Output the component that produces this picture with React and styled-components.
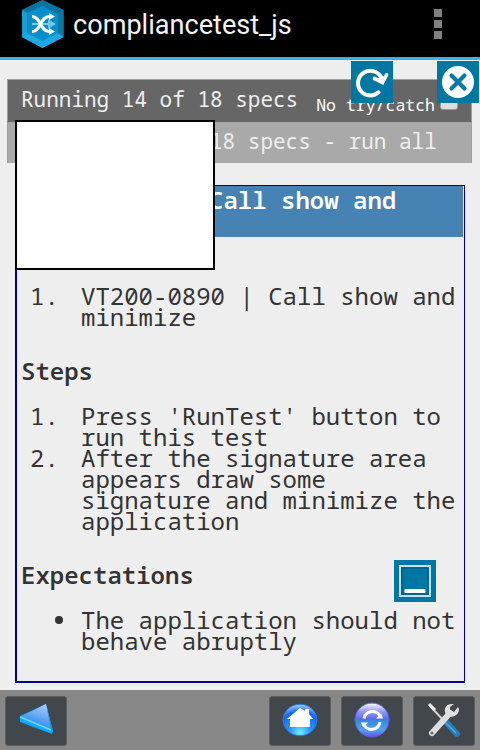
import React from 'react';
import styled, { createGlobalStyle } from 'styled-components';

const mono = '"Noto Sans Mono", "DejaVu Sans Mono", monospace';

const GlobalStyle = createGlobalStyle`
  * { box-sizing: border-box; }
  body { margin: 0; background: #eee; }
`;
const Screen = styled.div`
  position: relative;
  display: flex;
  flex-direction: column;
  width: 480px;
  height: 750px;
  overflow: hidden;
  background: #eee;
  color: #333;
  font-family: ${mono};
`;
const AppBar = styled.header`
  display: flex;
  align-items: center;
  flex: none;
  height: 60px;
  padding: 0 38px 0 21px;
  background: #000;
  border-bottom: 3px solid #33b5e5;
`;
const Logo = styled.svg`
  flex: none;
  width: 43px;
  height: 48px;
  margin-top: -9px;
`;
const Title = styled.h1`
  flex: 1;
  margin: -8px 0 0 9px;
  font: 400 27.100px/32px Roboto, sans-serif;
  color: #f3f3f3;
`;
const MenuDots = styled.div`
  display: grid;
  gap: 3px;
  margin-top: -9px;
  i { width: 8px; height: 8px; background: #808080; }
`;
const Content = styled.main`
  flex: 1;
  padding: 19px 8px 0 7px;
`;
const Bar = styled.div`
  display: flex;
  align-items: center;
  height: 42px;
  padding-left: ${p => p.$indent || 13}px;
  padding-bottom: 3px;
  background: ${p => p.$bg};
  border-left: 1px solid #a0a0a0;
  border-right: 1px solid #a0a0a0;
  border-top: 1px solid ${p => p.$edge};
  color: #eee;
  font-size: 21px;
  line-height: 38px;
  white-space: pre;
`;
const TryCatch = styled.label`
  display: flex;
  align-items: center;
  gap: 5px;
  margin-left: 18px;
  padding-top: 12px;
  font-size: 16.5px;
  color: #fff;
`;
const Checkbox = styled.span`
  width: 18px;
  height: 18px;
  margin-top: -8px;
  border: 1px solid #999;
  border-radius: 3px;
  background: #ddd;
`;
const Spec = styled.section`
  height: 498px;
  margin: 22px 0 0 8px;
  width: 450px;
  border: solid #00008b;
  border-width: 1px 1px 2px 2px;
  font-size: 24px;
  line-height: 21px;
`;
const SpecTitle = styled.h2`
  height: 51px;
  margin: 0 1px 0 0;
  padding: 3px 0 0 192px;
  background: #4682b4;
  color: #fff;
  font-size: 24px;
  font-weight: 600;
  line-height: 21px;
`;
const SubTitle = styled.h3`
  margin: 33px 0 24px 4px;
  font-size: 24px;
  font-weight: 600;
  line-height: 21px;
`;
const List = styled.div`
  margin-top: ${p => p.$top || 0}px;
`;
const Item = styled.div`
  display: grid;
  grid-template-columns: 51px 382px;
  padding-left: 13px;
`;
const Bullet = styled.i`
  width: 8px;
  height: 8px;
  margin: 7px 0 0 25px;
  border-radius: 50%;
  background: #333;
`;
const SignatureArea = styled.div`
  position: absolute;
  left: 15px;
  top: 120px;
  width: 200px;
  height: 150px;
  background: #fff;
  border: 2px solid #000;
`;
const FloatButton = styled.button`
  position: absolute;
  left: ${p => p.$x}px;
  top: ${p => p.$y}px;
  width: 42px;
  height: 42px;
  padding: 0;
  border: 0;
  background: #0077a3;
  svg { display: block; }
`;
const Toolbar = styled.footer`
  display: flex;
  flex: none;
  gap: 10px;
  height: 60px;
  padding: 6px 5px 4px;
  background: #888;
`;
const ToolButton = styled.button`
  display: grid;
  place-items: center;
  width: 62px;
  height: 50px;
  padding: 0 0 ${p => (p.$first ? 4 : 2)}px;
  margin-right: ${p => (p.$first ? 'auto' : 0)};
  border: 1px solid #5b5e60;
  border-radius: 3px;
  background: #41474b;
`;

function AppLogo() {
  return (
    <Logo viewBox="0 0 43 48">
      <path d="M21.5 0L42.5 10V37L21.5 48L1 37V10Z" fill="#078fc9" />
      <path d="M21.5 0L42.5 10L37 14L21.5 6L6 13L1 10Z" fill="#0673a0" />
      <path d="M42.5 10V37L37 33V14Z" fill="#0878a5" />
      <path d="M1 10L6 13V33L1 37Z" fill="#199ed4" />
      <path d="M1 37L6 33L21.5 41L37 33L42.5 37L21.5 48Z" fill="#1caae4" />
      <path d="M11 24H29M28 21L33 24L28 27Z" fill="#74c8e9" stroke="#74c8e9" strokeWidth="2" />
      <path d="M11 31.500C20 32 19 16.500 28 16.500H30M11 16.500C20 16.500 19 31.500 28 31.500H30" fill="none" stroke="#fff" strokeWidth="3" />
      <path d="M28 13L34 16.500L28 20ZM28 28L34 31.500L28 35Z" fill="#fff" />
    </Logo>
  );
}
function RefreshIcon() {
  return (
    <svg width="42" height="42" viewBox="0 0 42 42">
      <path d="M27.500 31.300A12.300 12.300 0 1 1 30.500 17" fill="none" stroke="#fff" strokeWidth="4" strokeLinecap="round" />
      <path d="M23.500 17.500L31.500 21.500L35.500 14" fill="none" stroke="#fff" strokeWidth="3.700" strokeLinecap="round" />
      <path d="M26 18L31 15L34 16L31.500 21Z" fill="#fff" />
    </svg>
  );
}
function CloseIcon() {
  return (
    <svg width="42" height="42" viewBox="0 0 42 42">
      <circle cx="21" cy="21" r="16" fill="#fff" />
      <path d="M14.500 14.500L27.500 27.500M27.500 14.500L14.500 27.500" stroke="#087aa5" strokeWidth="4.200" strokeLinecap="round" />
    </svg>
  );
}
function MinimizeIcon() {
  return (
    <svg width="42" height="42" viewBox="0 0 42 42">
      <rect x="6" y="6" width="30" height="30" fill="none" stroke="#c2e1ec" strokeWidth="2" />
      <rect x="8" y="8" width="26" height="26" fill="none" stroke="#006289" strokeWidth="1.500" />
      <rect x="10.500" y="29" width="21" height="4" rx="1" fill="#fff" />
    </svg>
  );
}
function BackIcon() {
  return (
    <svg width="34" height="30" viewBox="0 0 34 30">
      <defs>
        <linearGradient id="backFace" x1=".7" y1="0" x2=".3" y2="1">
          <stop stopColor="#a8cbff" /><stop offset=".55" stopColor="#5a9ff3" /><stop offset="1" stopColor="#118cf0" />
        </linearGradient>
      </defs>
      <path d="M27 0L34 27L33 30L1 18V12Z" fill="#12a7fa" />
      <path d="M27 0L33 25L1 13Z" fill="url(#backFace)" />
      <path d="M27 0L34 27L32 25Z" fill="#1685e4" />
      <path d="M1 13L32 26" stroke="#64dcff" strokeWidth="1.500" />
    </svg>
  );
}
function HomeIcon() {
  return (
    <svg width="36" height="34" viewBox="0 0 36 34">
      <defs>
        <radialGradient id="homeBall" cx=".5" cy=".9" r=".9">
          <stop stopColor="#76efff" /><stop offset=".35" stopColor="#2694ff" /><stop offset=".75" stopColor="#1767e8" /><stop offset="1" stopColor="#a9d3ff" />
        </radialGradient>
      </defs>
      <ellipse cx="18" cy="17" rx="17" ry="15.700" fill="url(#homeBall)" stroke="#2579df" />
      <path d="M5 16L18 5L23 8V6H27V11L31 16H28V24H8V16Z" fill="#fff" />
    </svg>
  );
}
function SyncIcon() {
  return (
    <svg width="36" height="38" viewBox="0 0 36 38">
      <defs>
        <linearGradient id="syncBall" x1="0" y1="0" x2="0" y2="1">
          <stop stopColor="#fff" /><stop offset=".25" stopColor="#9699ff" /><stop offset=".48" stopColor="#5969ee" /><stop offset=".52" stopColor="#398bdd" /><stop offset=".8" stopColor="#549ff0" /><stop offset="1" stopColor="#6354ed" />
        </linearGradient>
      </defs>
      <circle cx="18" cy="19" r="17" fill="url(#syncBall)" stroke="#5361db" />
      <path d="M10 17.500A8.500 8.500 0 0 1 25.500 14.500M26 21A8.500 8.500 0 0 1 10.500 24.500" fill="none" stroke="#fff" strokeWidth="3" />
      <path d="M22 17.500H29L27 12.500ZM7 21.500H14L9 26.500Z" fill="#fff" />
    </svg>
  );
}
function ToolsIcon() {
  return (
    <svg width="36" height="36" viewBox="0 0 36 36">
      <path d="M4 4L20 21" stroke="#d2d2d2" strokeWidth="2" />
      <path d="M3 2L9 8" stroke="#eee" strokeWidth="3" />
      <path d="M20 20L31 32" stroke="#287ebb" strokeWidth="6" strokeLinecap="round" />
      <path d="M19 20L30 31" stroke="#51a8da" strokeWidth="1.500" />
      <path d="M6 31L24 11" stroke="#dedede" strokeWidth="6" strokeLinecap="round" />
      <path d="M26 2C20 2 17 7 20 12C23 17 33 15 33 7L32 5L28 10L24 8L24 5L28 2Z" fill="#e0e0e0" />
      <circle cx="6" cy="31" r="1.500" fill="#64696c" />
    </svg>
  );
}

export default function App() {
  return (
    <>
      <GlobalStyle />
      <Screen>
        <AppBar>
          <AppLogo />
          <Title>compliancetest_js</Title>
          <MenuDots><i /><i /><i /></MenuDots>
        </AppBar>
        <Content>
          <Bar $bg="#666" $edge="#a0a0a0">
            Running 14 of 18 specs
            <TryCatch>No try/catch<Checkbox /></TryCatch>
          </Bar>
          <Bar $bg="#a9a9a9" $edge="#666" $indent={202}>18 specs - run all</Bar>
          <Spec>
            <SpecTitle>Call show and</SpecTitle>
            <List $top={48}>
              <Item><span>1.</span><span>VT200-0890 | Call show and minimize</span></Item>
            </List>
            <SubTitle>Steps</SubTitle>
            <List>
              <Item><span>1.</span><span>Press 'RunTest' button to run this test</span></Item>
              <Item><span>2.</span><span>After the signature area appears draw some signature and minimize the application</span></Item>
            </List>
            <SubTitle>Expectations</SubTitle>
            <List>
              <Item><Bullet /><span>The application should not behave abruptly</span></Item>
            </List>
          </Spec>
        </Content>
        <Toolbar>
          <ToolButton $first aria-label="Back"><BackIcon /></ToolButton>
          <ToolButton aria-label="Home"><HomeIcon /></ToolButton>
          <ToolButton aria-label="Reload"><SyncIcon /></ToolButton>
          <ToolButton aria-label="Settings"><ToolsIcon /></ToolButton>
        </Toolbar>
        <SignatureArea />
        <FloatButton $x={351} $y={61} aria-label="Refresh"><RefreshIcon /></FloatButton>
        <FloatButton $x={437} $y={61} aria-label="Close"><CloseIcon /></FloatButton>
        <FloatButton $x={394} $y={560} aria-label="Minimize"><MinimizeIcon /></FloatButton>
      </Screen>
    </>
  );
}
